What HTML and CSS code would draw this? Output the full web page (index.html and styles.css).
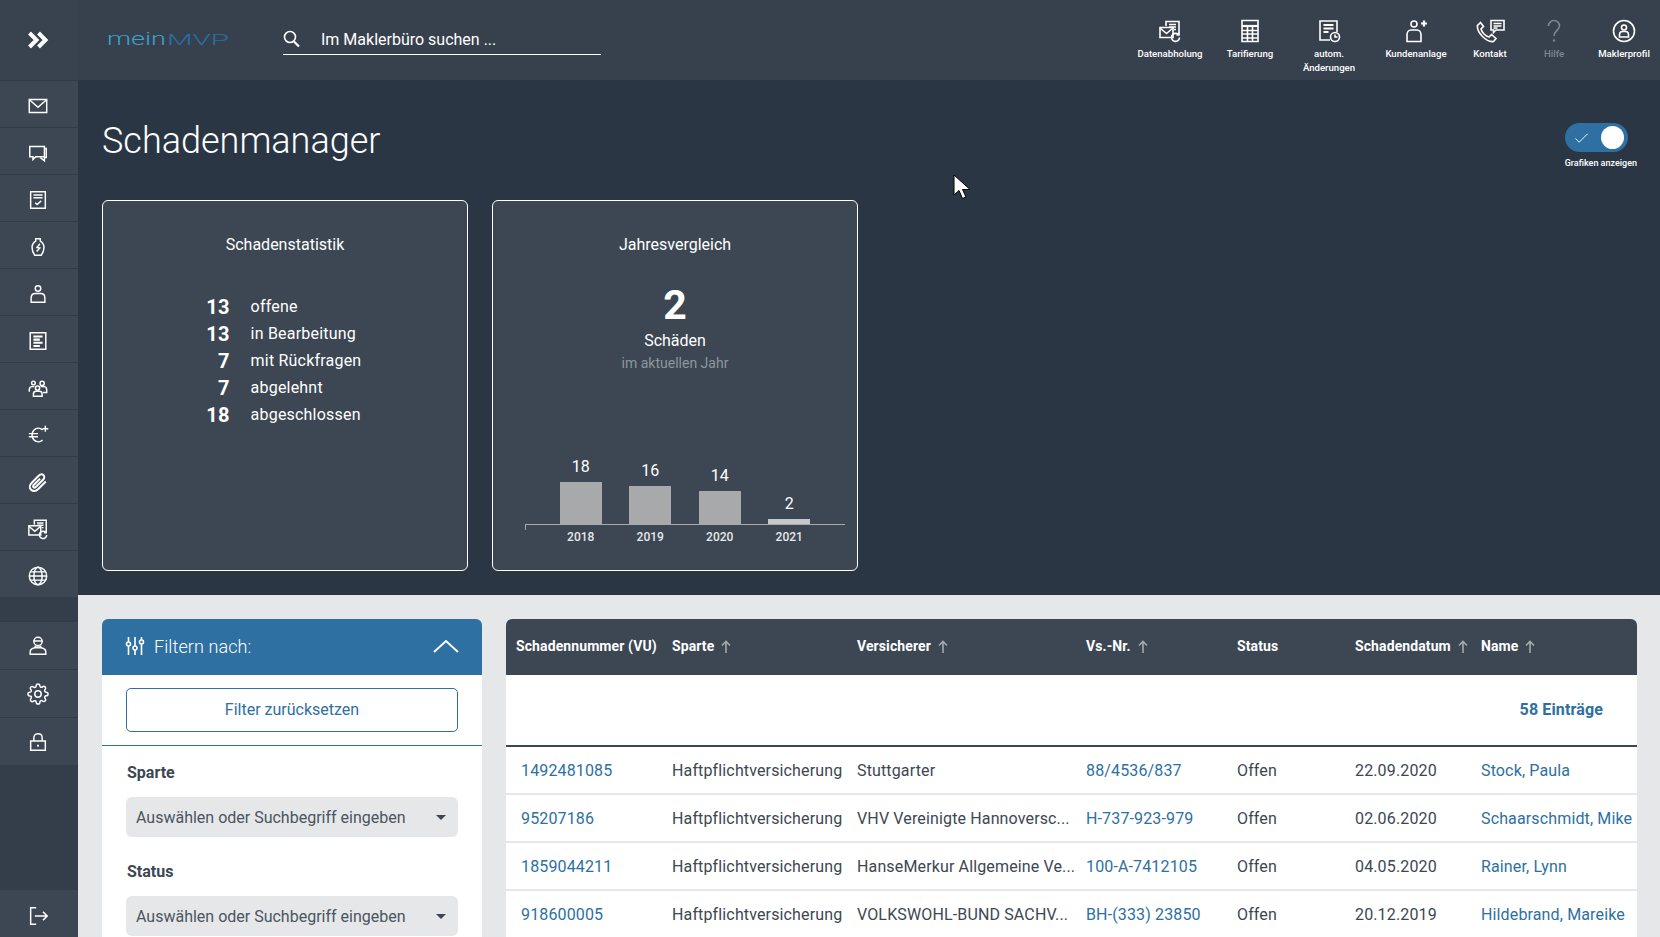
FILE: index.html
```html
<!DOCTYPE html>
<html lang="de">
<head>
    <meta charset="utf-8">
    <title>Schadenmanager</title>
    <link rel="stylesheet" href="styles.css">
</head>
<body>
    <svg class="defs" width="0" height="0">
        <symbol id="i-post" viewBox="0 0 24 24"><path d="M8 7V2.500h13v12"/><path d="M11 5.500h7M11 8h7M16 10.500h2"/><path d="M2 8.500h13v10H2z"/><path d="M2 9l6.500 5.500L15 9"/><path d="M21.500 18.500a4 4 0 1 1-1.200-3" /><path d="M21 13.500v2.500h-2.500"/></symbol>
        <symbol id="i-person" viewBox="0 0 24 24"><circle cx="12" cy="6" r="3"/><path d="M4.500 21v-4.500c0-3 2-5 4.500-5h6c2.500 0 4.500 2 4.500 5V21z"/></symbol>
        <symbol id="i-gear" viewBox="0 0 24 24"><circle cx="12" cy="12" r="3.500"/><path d="M19.400 15a1.650 1.650 0 0 0 .33 1.820l.06.06a2 2 0 0 1 0 2.830 2 2 0 0 1-2.830 0l-.06-.06a1.650 1.650 0 0 0-1.820-.33 1.650 1.650 0 0 0-1 1.510V21a2 2 0 0 1-2 2 2 2 0 0 1-2-2v-.09A1.650 1.650 0 0 0 9 19.400a1.650 1.650 0 0 0-1.820.33l-.06.06a2 2 0 0 1-2.830 0 2 2 0 0 1 0-2.830l.06-.06a1.650 1.650 0 0 0 .33-1.820 1.650 1.650 0 0 0-1.510-1H3a2 2 0 0 1-2-2 2 2 0 0 1 2-2h.09A1.650 1.650 0 0 0 4.600 9a1.650 1.650 0 0 0-.33-1.820l-.06-.06a2 2 0 0 1 0-2.830 2 2 0 0 1 2.830 0l.06.06a1.650 1.650 0 0 0 1.820.33H9a1.650 1.650 0 0 0 1-1.510V3a2 2 0 0 1 2-2 2 2 0 0 1 2 2v.09a1.650 1.650 0 0 0 1 1.510 1.650 1.650 0 0 0 1.820-.33l.06-.06a2 2 0 0 1 2.830 0 2 2 0 0 1 0 2.830l-.06.06a1.650 1.650 0 0 0-.33 1.820V9a1.650 1.650 0 0 0 1.510 1H21a2 2 0 0 1 2 2 2 2 0 0 1-2 2h-.09a1.650 1.650 0 0 0-1.510 1z"/></symbol>
        <symbol id="i-up" viewBox="0 0 10 13"><path d="M5 13V1.500M1 5.500l4-4 4 4"/></symbol>
    </svg>

    <div class="app">
        <nav class="sidebar">
            <div class="side-toggle">
                <svg class="chevrons" viewBox="0 0 24 24"><path d="M3.500 5l7 7-7 7M12.500 5l7 7-7 7"/></svg>
            </div>
            <ul class="side-group">
                <li><svg class="ic" viewBox="0 0 24 24"><path d="M2.500 5h19v14h-19z"/><path d="M3 5.500l9 8 9-8"/></svg></li>
                <li><svg class="ic" viewBox="0 0 24 24"><path d="M3 5h16v11H9.500l-3 3v-3H3z"/><path d="M19 7h2v10h-2v3.500L14.500 17"/></svg></li>
                <li><svg class="ic" viewBox="0 0 24 24"><path d="M4 3h16v18H4z"/><path d="M7 6.500h10M7 9.500h10"/><path d="M9 15l2 2 4.500-4"/></svg></li>
                <li><svg class="ic" viewBox="0 0 24 24"><path d="M9.500 3h5v2.500c2.500 1.500 4 4 4 7 0 3-1 6-3 8.500h-7c-2-2.500-3-5.500-3-8.500 0-3 1.500-5.500 4-7z"/><path d="M14 8.500l-3 4 3 .5-3.500 4"/></svg></li>
                <li><svg class="ic"><use href="#i-person"/></svg></li>
                <li><svg class="ic" viewBox="0 0 24 24"><path d="M3.500 3h17v18h-17z"/><path class="thick" d="M7 7h10M7 10.500h7M7 14h10M7 17.500h7"/></svg></li>
                <li><svg class="ic" viewBox="0 0 24 24"><circle cx="7" cy="6.500" r="2"/><circle cx="16.500" cy="7" r="2.300"/><circle cx="11.500" cy="12" r="2.300"/><path d="M2.500 16v-2c0-2 1.500-3.500 3-3.500h2.500M15 10.500h3.500c1.500 0 3 1.500 3 3.500v3h-4"/><path d="M7 21v-2.500c0-2 1.500-3 3-3h3.500c1.500 0 3 1 3 3V21z"/></svg></li>
                <li><svg class="ic" viewBox="0 0 24 24"><path d="M17 6.500c-1.300-1.300-3-2-4.500-2-4.300 0-7 3.400-7 7.500s2.700 7.500 7 7.500c1.500 0 3.200-.7 4.500-2"/><path d="M2 10.500h10M2 14h10"/><path d="M20 2v6.500M16.800 5.200h6.400"/></svg></li>
                <li><svg class="ic" viewBox="0 0 24 24"><path class="thick" d="M20.500 11.500l-8.500 8.500c-2.500 2.500-5.500 2.500-7.500.5s-2-5 .5-7.500l8-8c1.700-1.700 3.800-1.700 5-.5s1.200 3.300-.5 5l-8 8c-.8.8-1.800.8-2.400.2s-.6-1.600.2-2.400l7-7"/></svg></li>
                <li><svg class="ic"><use href="#i-post"/></svg></li>
                <li><svg class="ic" viewBox="0 0 24 24"><circle cx="12" cy="12" r="9.500"/><ellipse cx="12" cy="12" rx="4.500" ry="9.500"/><path d="M4.500 7.500h15M4.500 16.500h15M2.500 12h19"/></svg></li>
            </ul>
            <ul class="side-group side-second">
                <li><svg class="ic" viewBox="0 0 24 24"><circle cx="12" cy="7" r="4.500"/><path d="M7 6.500h10"/><path d="M9 11.500v1.500h6v-1.500"/><path d="M3.500 21v-2.500c0-2.500 2.500-4 5-4.500h7c2.500.5 5 2 5 4.500V21z"/></svg></li>
                <li><svg class="ic" viewBox="0 0 24 24"><use href="#i-gear"/></svg></li>
                <li><svg class="ic" viewBox="0 0 24 24"><path d="M4 11h16v10H4z"/><path d="M7.500 11V7c0-2.500 2-4 4.500-4s4.500 1.500 4.500 4v4"/><path class="thick" d="M12 15v2"/></svg></li>
            </ul>
            <div class="side-logout">
                <svg class="ic" viewBox="0 0 24 24"><path d="M10 3H4v18h6"/><path d="M8.500 12H22M17.500 7.500L22 12l-4.500 4.500"/></svg>
            </div>
        </nav>

        <div class="page">
            <header class="topbar">
                <svg class="logo" viewBox="0 0 122 16" width="122" height="16">
                    <text class="logo-a" x="0" y="13" textLength="59" lengthAdjust="spacingAndGlyphs">mein</text>
                    <text class="logo-b" x="60" y="13" textLength="62" lengthAdjust="spacingAndGlyphs">MVP</text>
                </svg>
                <div class="search">
                    <svg class="search-ic" viewBox="0 0 18 18"><circle cx="7" cy="7" r="5.500"/><path class="thick" d="M11 11.500l5 5"/></svg>
                    <span>Im Maklerbüro suchen ...</span>
                </div>
                <div class="actions">
                    <a class="action"><svg class="ic-lg"><use href="#i-post"/></svg><span>Datenabholung</span></a>
                    <a class="action"><svg class="ic-lg" viewBox="0 0 24 24"><path d="M4 1.500h16v21H4z"/><path class="thick" d="M4 7h16"/><path d="M4 11.500h16M4 15h16M4 19h16M9.500 7v15.500M14.500 7v15.500"/></svg><span>Tarifierung</span></a>
                    <a class="action"><svg class="ic-lg" viewBox="0 0 24 24"><path d="M13 21H3V2h17v11"/><path class="thick" d="M6.500 6h10M6.500 9.500h10M6.500 13h5"/><circle cx="18" cy="18" r="4.500"/><path d="M18 15.500V18h2.500"/></svg><span>autom.<br>Änderungen</span></a>
                    <a class="action"><svg class="ic-lg" viewBox="0 0 24 24"><circle cx="10" cy="5" r="3"/><path d="M3 22.500V16c0-3 2-5 4-5h6c2 0 4 2 4 5v6.500z"/><path class="thick" d="M20 1.500v6M17 4.500h6"/></svg><span>Kundenanlage</span></a>
                    <a class="action"><svg class="ic-wide" viewBox="0 0 30 24"><path d="M5.500 3.500L2.500 6.500c-.5 3 1.500 7.500 5 11s8 5.500 11 5l2.500-3-4.500-4-2.500 2.500c-2-.5-3.500-1.500-5-3s-2.500-3-3-5l2.500-2.500z"/><path d="M16 1.500h13v9.500h-8l-2.500 2.500V11H16z"/><path d="M18.500 4.500h8M18.500 7h8M18.500 9h4"/></svg><span>Kontakt</span></a>
                    <a class="action action-off"><svg class="ic-lg" viewBox="0 0 24 24"><path d="M6.500 7c0-3 2.500-5.500 5.500-5.500S17.500 4 17.500 7c0 4-5.500 5-5.500 10"/><path class="thick" d="M12 20.500v2"/></svg><span>Hilfe</span></a>
                    <a class="action"><svg class="ic-lg" viewBox="0 0 24 24"><circle cx="12" cy="12" r="10.500"/><circle cx="12" cy="8.500" r="2.500"/><path d="M7.500 18v-2.500c0-2 1.500-3 3-3h3c1.500 0 3 1 3 3V18z"/></svg><span>Maklerprofil</span></a>
                </div>
            </header>

            <section class="hero">
                <div class="hero-head">
                    <h1>Schadenmanager</h1>
                    <div class="switch-box">
                        <div class="switch">
                            <svg class="switch-check" viewBox="0 0 16 12"><path d="M1.500 6.500L5.500 10.500 14.500 1.500"/></svg>
                            <span class="switch-knob"></span>
                        </div>
                        <span class="switch-label">Grafiken anzeigen</span>
                    </div>
                </div>
                <div class="cards">
                    <div class="card">
                        <h2>Schadenstatistik</h2>
                        <ul class="stats">
                            <li><b>13</b><span>offene</span></li>
                            <li><b>13</b><span>in Bearbeitung</span></li>
                            <li><b>7</b><span>mit Rückfragen</span></li>
                            <li><b>7</b><span>abgelehnt</span></li>
                            <li><b>18</b><span>abgeschlossen</span></li>
                        </ul>
                    </div>
                    <div class="card">
                        <h2>Jahresvergleich</h2>
                        <div class="big-num">2</div>
                        <div class="big-label">Schäden</div>
                        <div class="big-sub">im aktuellen Jahr</div>
                        <div class="chart">
                            <div class="chart-bars">
                                <div class="col"><span>18</span><i style="height:42px"></i></div>
                                <div class="col"><span>16</span><i style="height:38px"></i></div>
                                <div class="col"><span>14</span><i style="height:33px"></i></div>
                                <div class="col col-now"><span>2</span><i style="height:5px"></i></div>
                            </div>
                            <div class="chart-years">
                                <span>2018</span><span>2019</span><span>2020</span><span>2021</span>
                            </div>
                        </div>
                    </div>
                </div>
            </section>

            <section class="content">
                <aside class="filter">
                    <div class="filter-head">
                        <svg class="filter-ic" viewBox="0 0 20 20"><path d="M3.500 1v5M3.500 10v9M10 1v9M10 14v5M16.500 1v3M16.500 8v11"/><circle cx="3.500" cy="8" r="2"/><circle cx="10" cy="12" r="2"/><circle cx="16.500" cy="6" r="2"/></svg>
                        <span>Filtern nach:</span>
                        <svg class="filter-up" viewBox="0 0 26 14"><path d="M1 13L13 2l12 11"/></svg>
                    </div>
                    <div class="filter-reset"><button>Filter zurücksetzen</button></div>
                    <div class="filter-body">
                        <label>Sparte</label>
                        <div class="select"><span>Auswählen oder Suchbegriff eingeben</span><i></i></div>
                        <label>Status</label>
                        <div class="select"><span>Auswählen oder Suchbegriff eingeben</span><i></i></div>
                    </div>
                </aside>

                <div class="list">
                    <table>
                        <colgroup>
                            <col class="c1"><col class="c2"><col class="c3"><col class="c4"><col class="c5"><col class="c6"><col class="c7">
                        </colgroup>
                        <thead>
                            <tr>
                                <th>Schadennummer (VU)</th>
                                <th>Sparte<svg class="up"><use href="#i-up"/></svg></th>
                                <th>Versicherer<svg class="up"><use href="#i-up"/></svg></th>
                                <th>Vs.-Nr.<svg class="up"><use href="#i-up"/></svg></th>
                                <th>Status</th>
                                <th>Schadendatum<svg class="up"><use href="#i-up"/></svg></th>
                                <th>Name<svg class="up"><use href="#i-up"/></svg></th>
                            </tr>
                        </thead>
                        <tbody>
                            <tr class="count"><td colspan="7">58 Einträge</td></tr>
                            <tr>
                                <td><a>1492481085</a></td><td>Haftpflichtversicherung</td><td>Stuttgarter</td><td><a>88/4536/837</a></td><td>Offen</td><td>22.09.2020</td><td><a>Stock, Paula</a></td>
                            </tr>
                            <tr>
                                <td><a>95207186</a></td><td>Haftpflichtversicherung</td><td>VHV Vereinigte Hannoversc...</td><td><a>H-737-923-979</a></td><td>Offen</td><td>02.06.2020</td><td><a>Schaarschmidt, Mike</a></td>
                            </tr>
                            <tr>
                                <td><a>1859044211</a></td><td>Haftpflichtversicherung</td><td>HanseMerkur Allgemeine Ve...</td><td><a>100-A-7412105</a></td><td>Offen</td><td>04.05.2020</td><td><a>Rainer, Lynn</a></td>
                            </tr>
                            <tr>
                                <td><a>918600005</a></td><td>Haftpflichtversicherung</td><td>VOLKSWOHL-BUND SACHV...</td><td><a>BH-(333) 23850</a></td><td>Offen</td><td>20.12.2019</td><td><a>Hildebrand, Mareike</a></td>
                            </tr>
                        </tbody>
                    </table>
                </div>
            </section>
        </div>
    </div>

    <svg class="cursor" viewBox="0 0 18 26"><path d="M1 1v20l5-4.500 3.500 8 3.500-1.500-3.500-7.500H17z"/></svg>
</body>
</html>
```

FILE: styles.css
```css
* {
    box-sizing: border-box;
}
html, body {
    margin: 0;
    height: 100%;
    overflow: hidden;
}
body {
    font-family: Roboto, "Liberation Sans", sans-serif;
    font-size: 16px;
    color: #fff;
    background-color: #2b3645;
}
ul {
    list-style: none;
    margin: 0;
    padding: 0;
}
.defs {
    position: absolute;
}
.app {
    display: flex;
    height: 937px;
    overflow: hidden;
}

/* icons */
svg path, svg circle, svg ellipse {
    fill: none;
    stroke: currentColor;
    stroke-width: 1.6;
}
svg .thick {
    stroke-width: 2.2;
}
.ic {
    width: 22px;
    height: 22px;
    color: #fff;
}
.ic-lg {
    width: 24px;
    height: 24px;
}
.ic-wide {
    width: 30px;
    height: 24px;
}

/* sidebar */
.sidebar {
    width: 78px;
    flex: none;
    display: flex;
    flex-direction: column;
    background-color: #343e4b;
}
.side-toggle {
    height: 80px;
    display: flex;
    align-items: center;
    justify-content: center;
    padding-right: 2px;
    background-color: #38434f;
}
.chevrons {
    width: 24px;
    height: 24px;
    color: #fff;
}
.chevrons path {
    stroke-width: 4;
}
.side-group li {
    height: 47px;
    display: flex;
    align-items: center;
    justify-content: center;
    padding: 4px 2px 0 0;
    background-color: #3c4753;
    border-top: 1px solid #313c49;
}
.side-second {
    margin-top: 24px;
}
.side-second li {
    height: 48px;
    padding-top: 0;
}
.side-logout {
    height: 47px;
    margin-top: auto;
    display: flex;
    align-items: center;
    justify-content: center;
    padding: 4px 2px 0 0;
    background-color: #3c4753;
}

/* top bar */
.page {
    flex: 1;
    min-width: 0;
    display: flex;
    flex-direction: column;
}
.topbar {
    height: 80px;
    flex: none;
    display: flex;
    background-color: #37414e;
}
.logo {
    margin: 32px 0 0 29px;
}
.logo text {
    font-family: Roboto, sans-serif;
    font-weight: 300;
}
.logo-a {
    font-size: 19px;
    fill: #3e9fc4;
}
.logo-b {
    font-size: 14px;
    fill: #2a6fa3;
}
.search {
    width: 318px;
    height: 55px;
    margin-left: 54px;
    padding: 26px 0 0 38px;
    display: flex;
    align-items: center;
    position: relative;
    border-bottom: 1px solid #fff;
    line-height: 30px;
}
.search-ic {
    position: absolute;
    left: 0;
    top: 30px;
    width: 18px;
    height: 18px;
}
.actions {
    margin-left: auto;
    padding-right: 4px;
    display: grid;
    grid-template-columns: 80px 80px 78px 96px 52px 76px 64px;
}
.action {
    display: flex;
    flex-direction: column;
    align-items: center;
    padding-top: 19px;
    font-size: 9.6px;
    font-weight: 500;
    line-height: 14px;
    text-align: center;
    white-space: nowrap;
}
.action span {
    margin-top: 4px;
}
.action-off {
    color: #7f868e;
}

/* hero with the two cards */
.hero {
    height: 515px;
    flex: none;
    padding: 0 23px 0 24px;
}
.hero-head {
    height: 120px;
    display: flex;
    justify-content: space-between;
}
h1 {
    margin: 39px 0 0;
    font-size: 36px;
    font-weight: 300;
    line-height: 44px;
}
.switch-box {
    margin-top: 43px;
    display: flex;
    flex-direction: column;
}
.switch {
    width: 63px;
    height: 29px;
    padding: 0 4px 0 9px;
    display: flex;
    align-items: center;
    justify-content: space-between;
    border-radius: 15px;
    background-color: #2d70a1;
}
.switch-check {
    width: 15px;
    height: 12px;
    color: #fff;
}
.switch-check path {
    stroke-width: 1;
}
.switch-knob {
    width: 23px;
    height: 23px;
    border-radius: 50%;
    background-color: #fff;
}
.switch-label {
    margin-top: 5px;
    font-size: 9px;
    font-weight: 500;
    line-height: 12px;
    white-space: nowrap;
}
.cards {
    display: flex;
    gap: 24px;
}
.card {
    width: 366px;
    height: 371px;
    padding-top: 32px;
    display: flex;
    flex-direction: column;
    align-items: center;
    border: 1px solid #fff;
    border-radius: 6px;
    background-color: #3c4753;
}
h2 {
    margin: 0;
    font-size: 16px;
    font-weight: 400;
    line-height: 24px;
}
.stats {
    margin-top: 36px;
    padding-right: 25px;
    letter-spacing: .2px;
}
.stats li {
    height: 27px;
    display: flex;
    align-items: center;
}
.stats b {
    width: 46px;
    margin-right: 21px;
    font-size: 20px;
    font-weight: 700;
    text-align: right;
}
.big-num {
    margin-top: 24px;
    font-size: 41px;
    font-weight: 700;
    line-height: 48px;
}
.big-label {
    line-height: 23px;
}
.big-sub {
    font-size: 14px;
    line-height: 22px;
    color: #8f969d;
}
.chart {
    width: 320px;
    margin-top: auto;
    margin-bottom: 25px;
    align-self: flex-start;
    margin-left: 32px;
}
.chart-bars {
    padding-left: 21px;
    display: flex;
    align-items: flex-end;
    border-bottom: 1px solid #a7a9ab;
    position: relative;
}
.chart-bars::after {
    content: "";
    position: absolute;
    left: 0;
    bottom: -6px;
    height: 6px;
    border-left: 1px solid #a7a9ab;
}
.col {
    width: 69.5px;
    display: flex;
    flex-direction: column;
    align-items: center;
}
.col span {
    line-height: 20px;
    margin-bottom: 5px;
}
.col i {
    width: 42px;
    display: block;
    background-color: #a7a9ab;
}
.col-now i {
    background-color: #c6c8ca;
}
.chart-years {
    padding-left: 21px;
    display: flex;
    margin-top: 4px;
}
.chart-years span {
    width: 69.5px;
    text-align: center;
    font-size: 12px;
    font-weight: 500;
    line-height: 16px;
    color: #e6e7e9;
}

/* lower part */
.content {
    flex: 1;
    display: flex;
    gap: 24px;
    padding: 24px 23px 0 24px;
    background-color: #e6e7e9;
    min-height: 0;
}
.filter {
    width: 380px;
    flex: none;
    background-color: #fff;
    border-radius: 6px 6px 0 0;
    color: #3c4753;
}
.filter-head {
    height: 56px;
    padding: 0 23px 2px 23px;
    display: flex;
    align-items: center;
    color: #fff;
    font-size: 18px;
    font-weight: 300;
    letter-spacing: .1px;
    border-radius: 6px 6px 0 0;
    background-color: #2d70a1;
}
.filter-ic {
    width: 20px;
    height: 20px;
    margin-right: 9px;
}
.filter-up {
    width: 26px;
    height: 14px;
    margin-left: auto;
}
.filter-up path {
    stroke-width: 2;
}
.filter-reset {
    height: 71px;
    padding: 13px 24px 0;
    border-bottom: 1px solid #2d70a1;
}
button {
    width: 332px;
    height: 44px;
    padding: 0 0 2px;
    font-family: inherit;
    font-size: 16px;
    color: #2d70a1;
    background-color: #fff;
    border: 1px solid #2d70a1;
    border-radius: 5px;
}
.filter-body {
    padding: 15px 24px 0;
}
label {
    display: block;
    padding-left: 1px;
    font-weight: 700;
    line-height: 24px;
}
.select {
    height: 40px;
    margin: 12px 0 23px;
    padding: 0 12px 0 10px;
    display: flex;
    align-items: center;
    justify-content: space-between;
    color: #4a5560;
    border-radius: 6px;
    background-color: #e6e7e9;
}
.select i {
    border: 5px solid transparent;
    border-top-color: #3c4753;
    border-bottom: 0;
}

/* table */
.list {
    flex: 1;
    min-width: 0;
    background-color: #fff;
    border-radius: 6px 6px 0 0;
}
table {
    width: 100%;
    table-layout: fixed;
    border-collapse: collapse;
    color: #3c4753;
}
.c1 { width: 156px; }
.c2 { width: 185px; }
.c3 { width: 229px; }
.c4 { width: 151px; }
.c5 { width: 118px; }
.c6 { width: 126px; }
.c7 { width: 166px; }
th {
    height: 56px;
    padding: 0 0 2px 10px;
    text-align: left;
    font-size: 14px;
    font-weight: 700;
    letter-spacing: .1px;
    color: #fff;
    white-space: nowrap;
    background-color: #3c4753;
}
th:first-child {
    border-radius: 6px 0 0 0;
}
th:last-child {
    border-radius: 0 6px 0 0;
}
.up {
    width: 10px;
    height: 13px;
    margin-left: 7px;
    vertical-align: -2px;
    color: #a7a9ab;
}
td {
    height: 48px;
    padding: 0 0 0 10px;
    letter-spacing: .14px;
    white-space: nowrap;
    border-bottom: 2px solid #e6e7e9;
}
td:first-child {
    padding-left: 15px;
}
td a {
    color: #2d70a1;
}
.count td {
    height: 71px;
    padding: 0 34px 2px 0;
    text-align: right;
    font-weight: 700;
    color: #2d70a1;
    border-bottom: 2px solid #3c4753;
}

/* mouse pointer in the picture */
.cursor {
    position: absolute;
    left: 953px;
    top: 174px;
    width: 18px;
    height: 26px;
}
.cursor path {
    fill: #fff;
    stroke: #000;
    stroke-width: 1;
}
```
